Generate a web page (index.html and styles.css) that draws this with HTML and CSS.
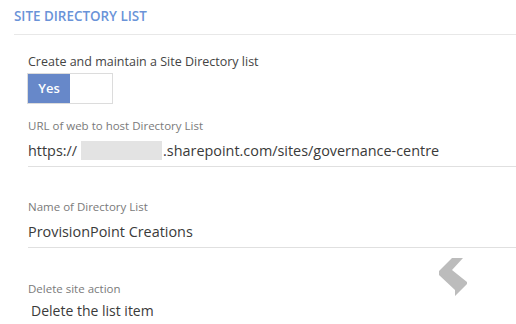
FILE: index.html
```html
<!DOCTYPE html>
<html lang="en">
<head>
<meta charset="UTF-8">
<title>Site Directory List</title>
<link rel="stylesheet" href="styles.css">
</head>
<body>
    <!-- Section header -->
    <div class="section-header">
        <h2>SITE DIRECTORY LIST</h2>
    </div>

    <div class="section-body">
        <!-- Toggle -->
        <div class="field toggle-field">
            <label>Create and maintain a Site Directory list</label>
            <div class="toggle">
                <span class="toggle-on">Yes</span>
                <span class="toggle-off"></span>
            </div>
        </div>

        <!-- URL -->
        <div class="field text-field">
            <label>URL of web to host Directory List</label>
            <div class="value">https://<span class="redacted"></span>.sharepoint.com/sites/governance-centre</div>
        </div>

        <!-- Name -->
        <div class="field text-field name-field">
            <label>Name of Directory List</label>
            <div class="value">ProvisionPoint Creations</div>
        </div>

        <!-- Delete action -->
        <div class="field select-field">
            <label>Delete site action</label>
            <div class="value">Delete the list item</div>
        </div>
    </div>

    <!-- Drag cursor over the form -->
    <svg class="cursor-chevron" width="30" height="40" viewBox="0 0 30 40">
        <polygon points="14,1 25,1 14,13 29,25 29,27 17,39 17,33 1,18 1,14" fill="#bcbcbc"/>
    </svg>
</body>
</html>
```

FILE: styles.css
```css
/* General */
* {
    margin: 0;
    padding: 0;
    box-sizing: border-box;
    font-family: 'Open Sans', sans-serif;
}

body {
    position: relative;
    background: #fff;
    color: #3a3a3a;
    width: 516px;
    height: 324px;
    overflow: hidden;
}

/* Header */
.section-header {
    margin-left: 14px;
    padding: 7px 0 9px;
    border-bottom: 1px solid #e8e8e8;
}

.section-header h2 {
    font-size: 13.4px;
    font-weight: 600;
    color: #6a93d8;
    line-height: 18px;
}

/* Body */
.section-body {
    padding-left: 28px;
    display: flex;
    flex-direction: column;
}

.field label {
    display: block;
    color: #7a7a7a;
    font-size: 11.5px;
    line-height: 16px;
}

/* Toggle */
.toggle-field {
    margin-top: 18px;
}

.toggle-field label {
    color: #444;
    font-size: 12.5px;
    line-height: 18px;
}

.toggle {
    display: flex;
    width: 86px;
    height: 31px;
    margin-top: 2px;
    margin-left: -1px;
    border: 1px solid #dcdcdc;
}

.toggle-on {
    width: 42px;
    background: #6788c9;
    color: #fff;
    font-size: 13px;
    font-weight: 600;
    line-height: 29px;
    text-align: center;
}

.toggle-off {
    flex: 1;
}

/* Text fields */
.text-field {
    margin-top: 14px;
}

.text-field .value {
    font-size: 14.4px;
    line-height: 22px;
    padding: 6px 0 4px;
    border-bottom: 1px solid #e0e0e0;
}

.name-field {
    margin-top: 32px;
}

.redacted {
    display: inline-block;
    width: 81px;
    height: 19px;
    margin: 0 1px 0 4px;
    background: #e3e3e3;
    vertical-align: -4px;
}

/* Select field */
.select-field {
    margin-top: 33px;
}

.select-field .value {
    font-size: 14px;
    line-height: 18px;
    padding: 5px 0 0 3px;
}

.cursor-chevron {
    position: absolute;
    left: 438px;
    top: 257px;
}
```
